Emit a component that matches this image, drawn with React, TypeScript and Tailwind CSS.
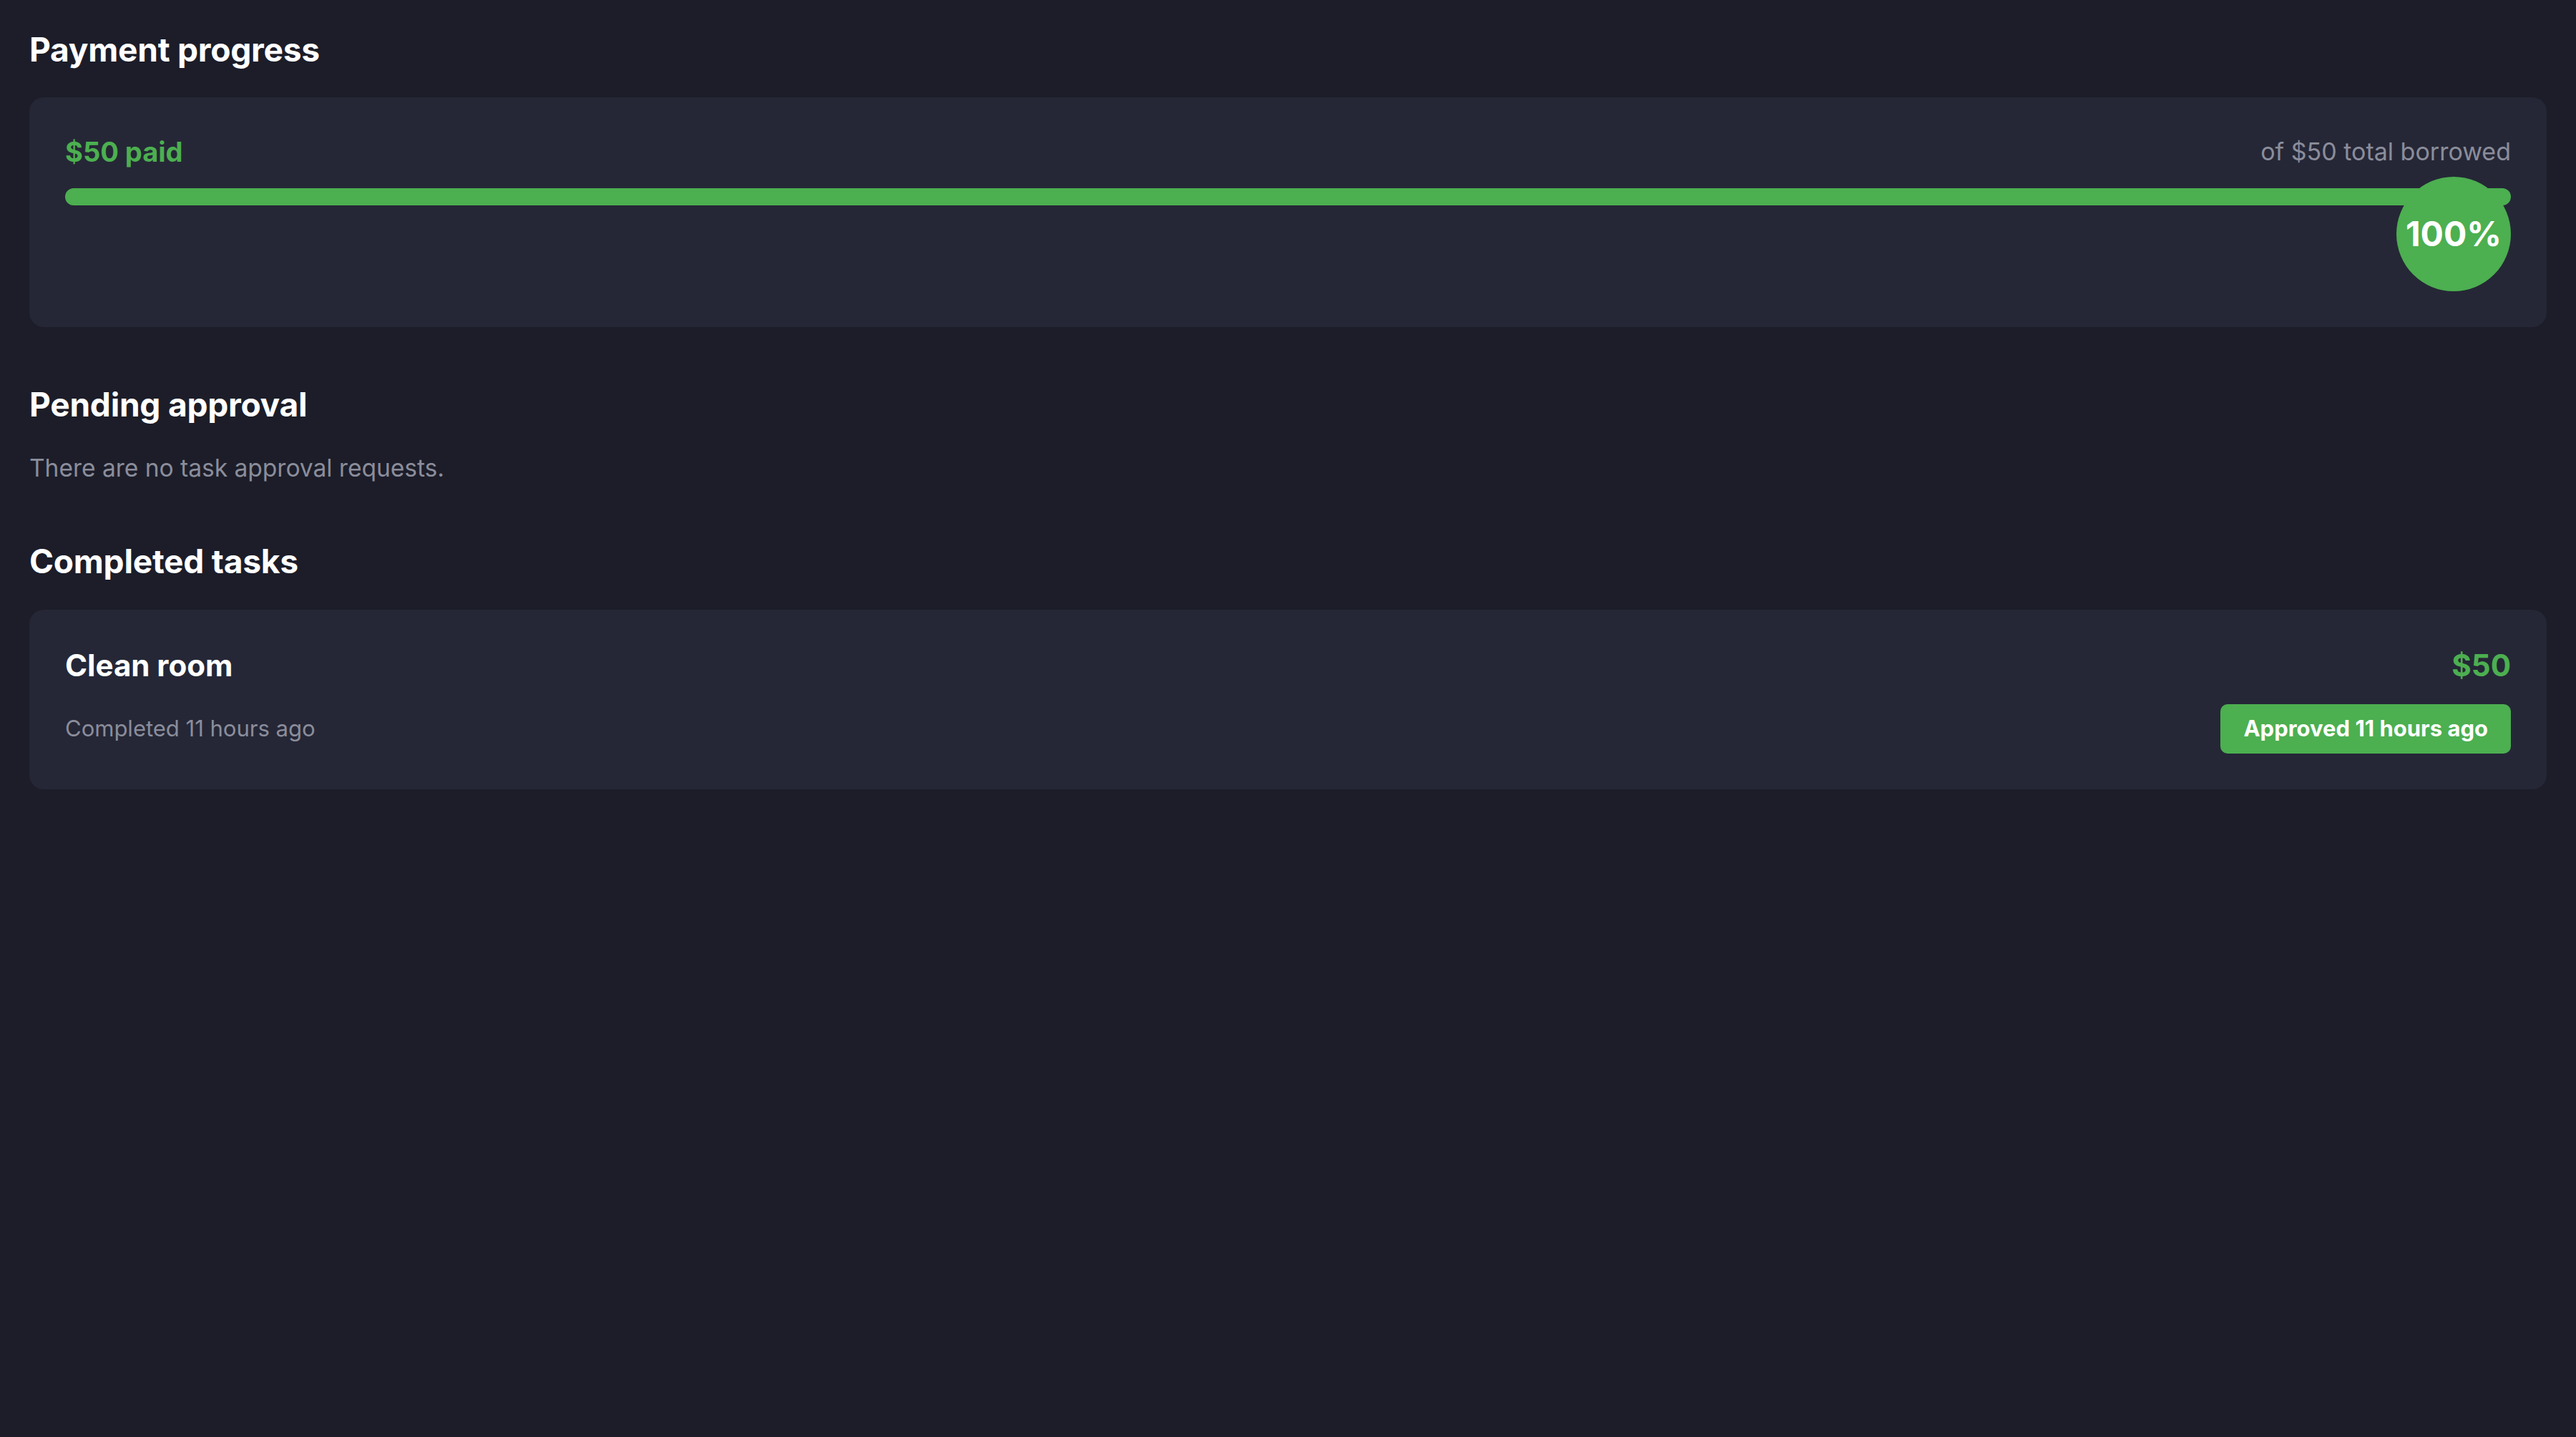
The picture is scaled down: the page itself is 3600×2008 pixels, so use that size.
const task = {
  title: 'Clean room',
  amount: 50,
  completed: '11 hours ago',
  approved: '11 hours ago',
};

function SectionTitle({ children }: { children: React.ReactNode }) {
  return <h2 className="text-[46px] leading-[56px] font-bold tracking-[-0.2px] text-white">{children}</h2>;
}

export default function App() {
  const paid = 50;
  const total = 50;
  const pct = Math.round((paid / total) * 100);

  return (
    <div className="min-h-screen bg-[#1c1d29] px-[41px] pt-[41px] font-['Inter',sans-serif]">
      <SectionTitle>Payment progress</SectionTitle>

      {/* progress card */}
      <div className="mt-[39px] rounded-[20px] bg-[#252736] px-[50px] pt-[50px] pb-[50px]">
        <div className="flex items-center justify-between">
          <span className="text-[38px] leading-[52px] font-bold text-[#4caf50]">${paid} paid</span>
          <span className="text-[34px] leading-[52px] text-[#8b8d9b]">of ${total} total borrowed</span>
        </div>
        <div className="relative mt-[25px] pb-[120px]">
          <div className="h-[24px] w-full rounded-full bg-[#2f3142]">
            <div className="h-full rounded-full bg-[#4caf50]" style={{ width: `${pct}%` }} />
          </div>
          <div className="absolute right-0 top-[-16px] flex h-[160px] w-[160px] items-center justify-center rounded-full bg-[#4caf50] text-[48px] font-bold text-white">
            {pct}%
          </div>
        </div>
      </div>

      <div className="mt-[80px]">
        <SectionTitle>Pending approval</SectionTitle>
        <p className="mt-[37px] text-[33.5px] leading-[48px] text-[#8b8d9b]">There are no task approval requests.</p>
      </div>

      <div className="mt-[78px]">
        <SectionTitle>Completed tasks</SectionTitle>
        <div className="mt-[40px] rounded-[20px] bg-[#252736] p-[50px]">
          <div className="flex items-center justify-between">
            <span className="text-[42px] leading-[55px] font-bold text-white">{task.title}</span>
            <span className="text-[42px] leading-[55px] font-bold text-[#4caf50]">${task.amount}</span>
          </div>
          <div className="mt-[27px] flex items-center justify-between">
            <span className="text-[31px] text-[#8b8d9b]">Completed {task.completed}</span>
            <span className="flex h-[69px] items-center rounded-[10px] bg-[#4caf50] px-[32px] text-[31px] font-bold text-white">
              Approved {task.approved}
            </span>
          </div>
        </div>
      </div>
    </div>
  );
}
